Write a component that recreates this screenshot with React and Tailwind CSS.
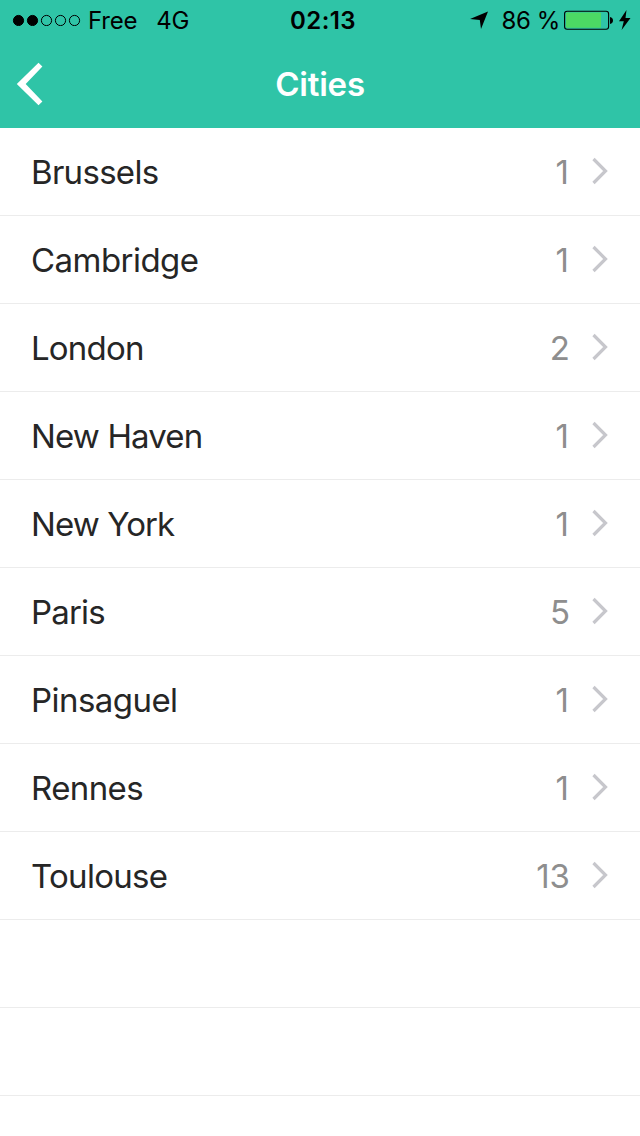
import React from 'react';

const cities = [
  { name: 'Brussels', count: 1, tracking: 'tracking-[-0.7px]' },
  { name: 'Cambridge', count: 1, tracking: 'tracking-[-0.55px]' },
  { name: 'London', count: 2, tracking: 'tracking-[-0.8px]' },
  { name: 'New Haven', count: 1, tracking: 'tracking-[-0.85px]' },
  { name: 'New York', count: 1, tracking: 'tracking-[-0.9px]' },
  { name: 'Paris', count: 5, tracking: 'tracking-[-0.85px]' },
  { name: 'Pinsaguel', count: 1, tracking: 'tracking-[-0.55px]' },
  { name: 'Rennes', count: 1, tracking: 'tracking-[-0.6px]' },
  { name: 'Toulouse', count: 13, tracking: 'tracking-[-0.7px]' },
];

const SignalDots = () => (
  <svg className="shrink-0" width="70" height="12" viewBox="0 0 70 12">
    {[0, 1, 2, 3, 4].map((i) => (
      <circle
        key={i}
        cx={6.5 + i * 14}
        cy="6.5"
        r="5.1"
        fill={i < 2 ? '#000' : 'none'}
        stroke="#000"
        strokeWidth="1"
      />
    ))}
  </svg>
);

const LocationArrow = () => (
  <svg className="shrink-0" width="18" height="18" viewBox="0 0 18 18">
    <path d="M0 8 18 .5 11 18 9.8 9Z" fill="#000" />
  </svg>
);

const Battery = () => (
  <svg className="shrink-0" width="50" height="20" viewBox="0 0 50 20">
    <rect x="0.6" y="1.2" width="44" height="18" rx="2.5" fill="none" stroke="#000" strokeWidth="1.1" />
    <rect x="2" y="2.6" width="35" height="15.2" rx="1" fill="#4cd964" />
    <path d="M46 7c2 .4 3 1.700 3 3.500s-1 3.100-3 3.500Z" fill="#000" />
  </svg>
);

const Bolt = () => (
  <svg className="shrink-0" width="12" height="20" viewBox="0 0 12 20">
    <path d="M7.500 0 0 11.200H4.800L2.600 20 11.500 8H6.500Z" fill="#000" />
  </svg>
);

const StatusBar = () => (
  <div className="flex h-10 items-center text-2xl text-black">
    <div className="flex flex-1 items-center pl-3">
      <SignalDots />
      <span className="ml-1.5 pt-0.5 tracking-[-0.2px]">Free</span>
      <span className="ml-[19px] pt-0.5 tracking-[-0.2px]">4G</span>
    </div>
    <span className="pt-0.5 pl-[3px] font-semibold tracking-[0.4px]">02:13</span>
    <div className="flex flex-1 items-center justify-end pr-[9px]">
      <LocationArrow />
      <span className="ml-3.5 pt-0.5 whitespace-nowrap tracking-[-0.4px]">86 %</span>
      <span className="ml-1"><Battery /></span>
      <span className="ml-[5px]"><Bolt /></span>
    </div>
  </div>
);

const NavBar = () => (
  <div className="grid h-[88px] grid-cols-[1fr_auto_1fr] items-center">
    <button className="ml-4 w-7" aria-label="Back">
      <svg width="28" height="44" viewBox="0 0 28 44">
        <path d="M22.500 .8 26.400 4.600 9.700 22 26.400 39.400 22.500 43.200 .8 22Z" fill="#fff" />
      </svg>
    </button>
    <h1 className="pt-0.5 text-[33px] font-semibold tracking-[-0.2px] text-white">Cities</h1>
    <div />
  </div>
);

const CityRow = ({ city }) => (
  <li className="flex h-[88px] items-center border-b border-[#ececec] pl-[31px] pr-8">
    <span className={`flex-1 pt-[3px] text-[33px] text-[#262626] ${city.tracking}`}>{city.name}</span>
    <span className={`pt-[3px] text-[33px] text-[#8e8e8e] ${city.count === 1 ? 'mr-px' : ''}`}>
      {city.count}
    </span>
    <svg className="mb-0.5 ml-[22px] shrink-0" width="16" height="28" viewBox="0 0 16 28">
      <path d="M1.500 2 13.500 14 1.500 26" fill="none" stroke="#c7c7cc" strokeWidth="3.200" />
    </svg>
  </li>
);

export default function App() {
  return (
    <div className="flex h-[1136px] w-[640px] flex-col overflow-hidden bg-white font-['Inter',sans-serif]">
      <header className="bg-[#2fc4a7]">
        <StatusBar />
        <NavBar />
      </header>
      <ul>
        {cities.map((city) => (
          <CityRow key={city.name} city={city} />
        ))}
        {/* Empty rows fill the rest of the table */}
        <li className="h-[88px] border-b border-[#ececec]" />
        <li className="h-[88px] border-b border-[#ececec]" />
      </ul>
    </div>
  );
}
